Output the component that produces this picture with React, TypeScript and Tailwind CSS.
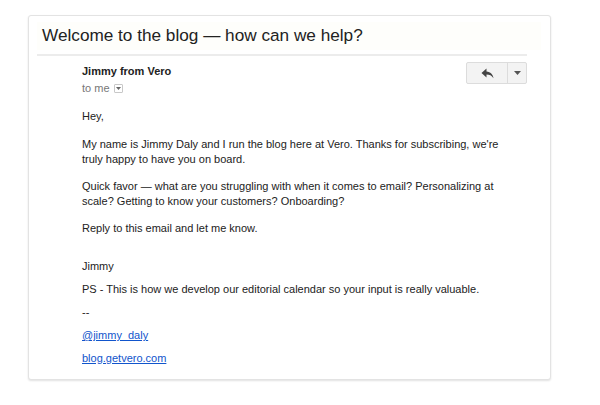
import React from 'react'

const sans = "font-['Liberation_Sans',Arial,sans-serif]"

function ReplyIcon() {
  return (
    <svg width="13" height="11" viewBox="0 0 13 11" className="text-[#444]">
      <path d="M5.5 0.5 L0.5 5 L5.5 9.5 L5.5 6.6 C8.6 6.6 10.6 7.6 12.5 10.2 C11.8 6.4 9.6 3.9 5.5 3.5 Z" fill="currentColor" />
    </svg>
  )
}

function Caret() {
  return (
    <svg width="7" height="4" viewBox="0 0 7 4">
      <path d="M0 0 L7 0 L3.5 4 Z" fill="#555" />
    </svg>
  )
}

export default function App() {
  return (
    <div className={`w-[600px] h-[405px] bg-white pt-[15px] pl-[28px] ${sans}`}>
      <div className="w-[523px] h-[365px] rounded-[3px] border border-[#e3e3e3] shadow-[0_1px_2px_rgba(0,0,0,0.12)] bg-white pt-[6px] px-[8px]">
        {/* asunto */}
        <div className="h-[28px] bg-[#fefefb] flex items-center pl-[5px] mr-[1px]">
          <h1 className="text-[17.2px] text-[#222] leading-none">Welcome to the blog — how can we help?</h1>
        </div>
        <div className="mt-[4px] h-[2px] bg-[#ececec] w-[490px]" />

        {/* cabecera del mensaje */}
        <div className="w-[490px] flex justify-between pl-[45px] pt-[6px]">
          <div className="pt-[2px]">
            <div className="text-[11px] font-bold text-[#222] leading-[14px]">Jimmy from Vero</div>
            <div className="mt-[3px] flex items-center gap-[4px] text-[11px] text-[#777] leading-[14px]">
              to me
              <span className="w-[9px] h-[9px] border border-[#c8c8c8] rounded-[1px] flex items-center justify-center bg-white">
                <svg width="5" height="3" viewBox="0 0 5 3"><path d="M0 0 L5 0 L2.5 3 Z" fill="#666" /></svg>
              </span>
            </div>
          </div>
          <div className="flex h-[22px] rounded-[2px] border border-[#dcdcdc] bg-[#f3f3f3]">
            <div className="w-[41px] flex items-center justify-center border-r border-[#dcdcdc]">
              <ReplyIcon />
            </div>
            <div className="w-[18px] flex items-center justify-center">
              <Caret />
            </div>
          </div>
        </div>

        {/* cuerpo */}
        <div className="pl-[45px] pt-[14px] text-[11px] leading-[15px] text-[#222]">
          <p>Hey,</p>
          <p className="mt-[13px] w-[430px]">
            My name is Jimmy Daly and I run the blog here at Vero. Thanks for subscribing, we're truly happy to have you on board.
          </p>
          <p className="mt-[12px] w-[430px]">
            Quick favor — what are you struggling with when it comes to email? Personalizing at scale? Getting to know your customers? Onboarding?
          </p>
          <p className="mt-[12px]">Reply to this email and let me know.</p>
          <p className="mt-[23px]">Jimmy</p>
          <p className="mt-[8px]">PS - This is how we develop our editorial calendar so your input is really valuable.</p>
          <p className="mt-[8px]">--</p>
          <p className="mt-[8px]"><a className="text-[#1155cc] underline">@jimmy_daly</a></p>
          <p className="mt-[8px]"><a className="text-[#1155cc] underline">blog.getvero.com</a></p>
        </div>
      </div>
    </div>
  )
}
